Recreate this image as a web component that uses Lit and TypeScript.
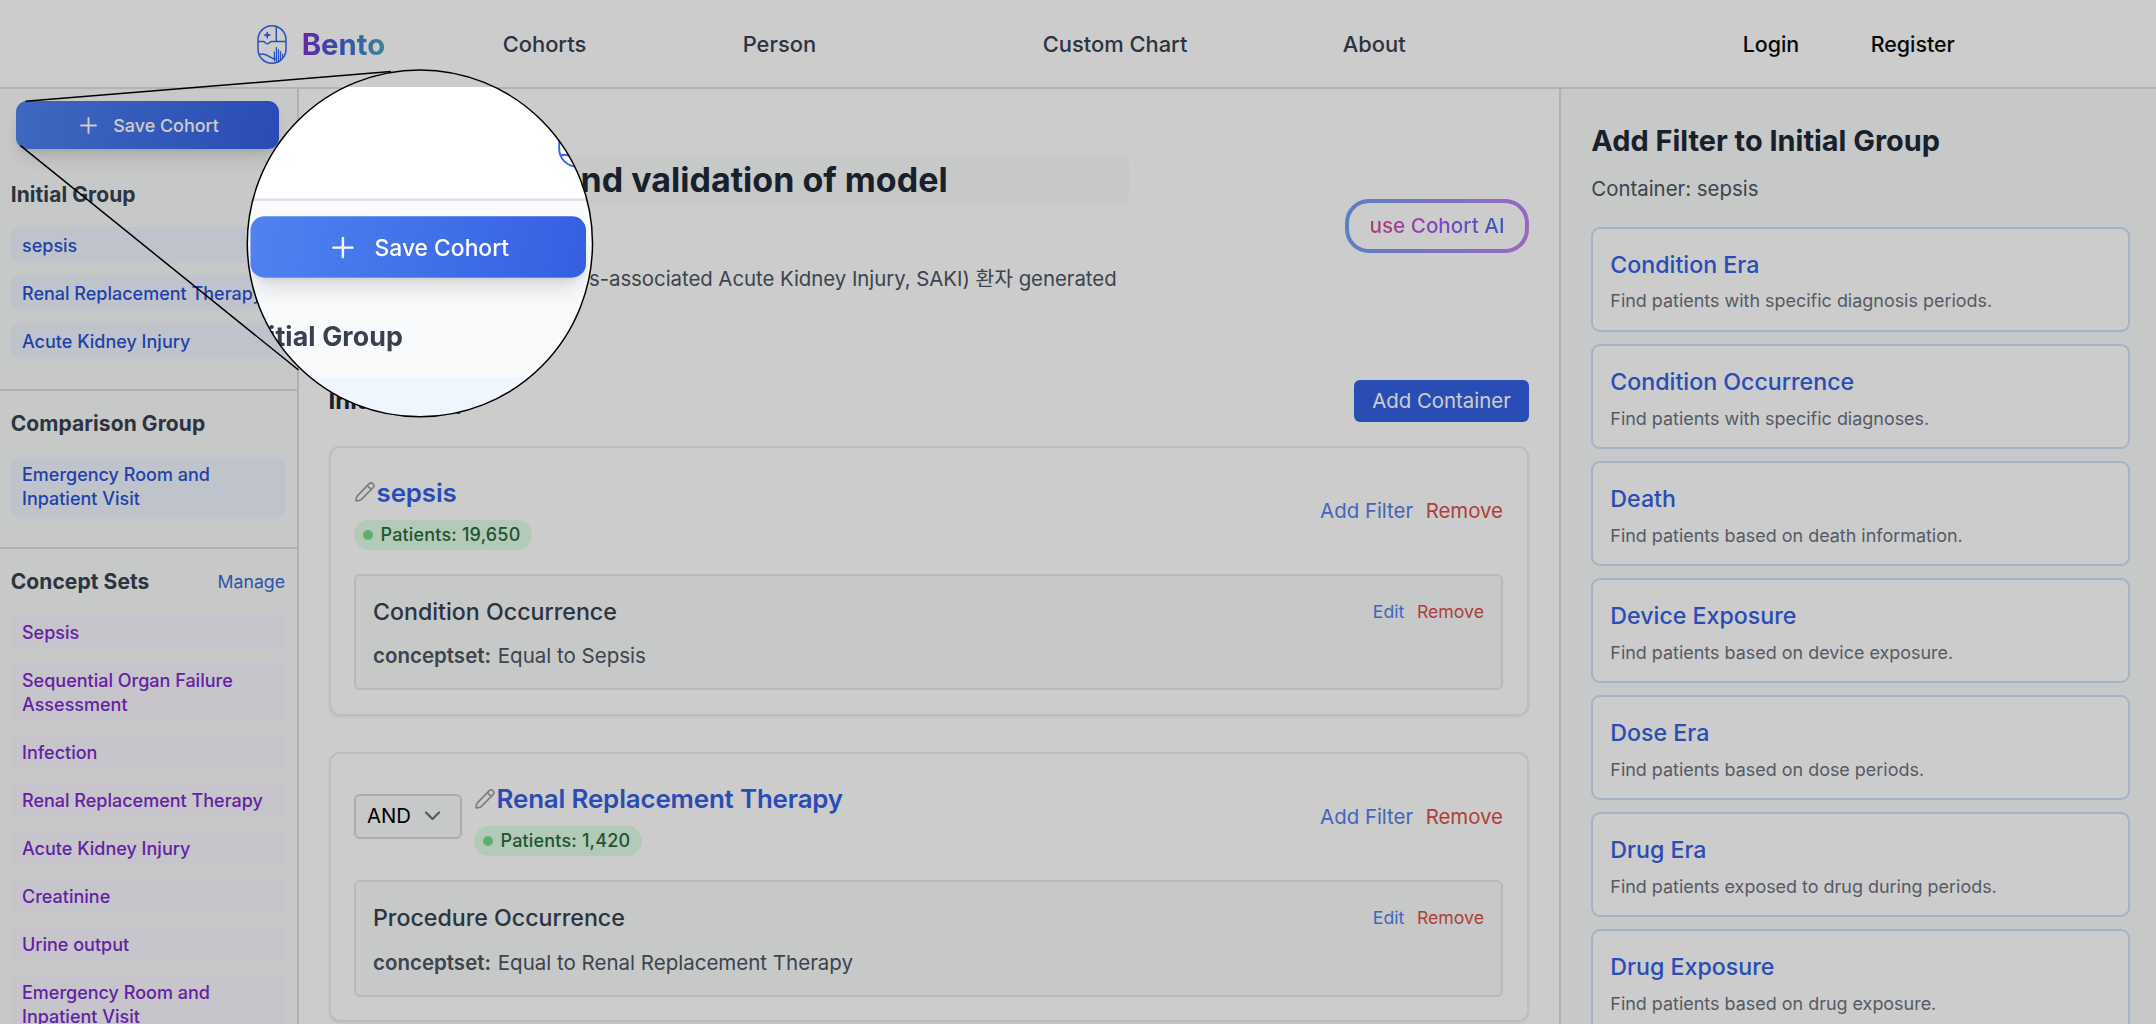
import { LitElement, html, css, nothing } from "lit";
import { customElement, property } from "lit/decorators.js";

interface FilterEntry {
  kind: string;
  value: string;
}

interface ContainerEntry {
  operator?: string;
  name: string;
  patients: string;
  filter: FilterEntry;
}

const INITIAL_GROUP = ["sepsis", "Renal Replacement Therapy", "Acute Kidney Injury"];
const COMPARISON_GROUP = ["Emergency Room and Inpatient Visit"];
const CONCEPT_SETS = [
  "Sepsis",
  "Sequential Organ Failure Assessment",
  "Infection",
  "Renal Replacement Therapy",
  "Acute Kidney Injury",
  "Creatinine",
  "Urine output",
  "Emergency Room and Inpatient Visit",
];

const LENS_ROWS = ["\u00a0"];

const CONTAINERS: ContainerEntry[] = [
  {
    name: "sepsis",
    patients: "19,650",
    filter: { kind: "Condition Occurrence", value: "Equal to Sepsis" },
  },
  {
    operator: "AND",
    name: "Renal Replacement Therapy",
    patients: "1,420",
    filter: { kind: "Procedure Occurrence", value: "Equal to Renal Replacement Therapy" },
  },
];

const FILTERS: [string, string][] = [
  ["Condition Era", "Find patients with specific diagnosis periods."],
  ["Condition Occurrence", "Find patients with specific diagnoses."],
  ["Death", "Find patients based on death information."],
  ["Device Exposure", "Find patients based on device exposure."],
  ["Dose Era", "Find patients based on dose periods."],
  ["Drug Era", "Find patients exposed to drug during periods."],
  ["Drug Exposure", "Find patients based on drug exposure."],
];

@customElement("bento-logo")
export class BentoLogo extends LitElement {
  static styles = css`
    :host {
      display: block;
      width: 30px;
      height: 39px;
    }
    svg {
      display: block;
      fill: none;
      stroke: #3565ec;
      stroke-width: 1.5;
      stroke-linejoin: round;
    }
    .solid {
      fill: #3565ec;
      stroke: none;
    }
    .fine {
      stroke-width: 1.2;
    }
  `;

  render() {
    return html`<svg width="30" height="39" viewBox="0 0 30 39">
      <rect x="1" y="0.8" width="28" height="37.4" rx="14" />
      <path d="M19.3 1.4V16.5" />
      <path d="M1 16.5H6.2C8.2 16.5 8.6 18.8 10.4 18.8S12.6 16.5 14.6 16.5H29" />
      <path
        class="solid"
        d="M10.3 6.3L11.3 9.1L13.9 10.1L11.3 11.1L10.3 13.9L9.3 11.1L6.7 10.1L9.3 9.1Z"
      />
      <path class="fine" d="M10.3 7V13.2M7.2 10.1H13.4" />
      <path d="M1.8 29.4C6 28.2 9.5 29.4 12.5 31.6C15 33.4 17 34 19.3 34" />
      <path
        class="fine"
        d="M17.4 26.5V36.5M19.4 22V37M21.4 24V36.6M23.4 26V35.4M25.4 28.5V33.4"
      />
    </svg>`;
  }
}

@customElement("save-button")
export class SaveButton extends LitElement {
  static styles = css`
    :host {
      display: block;
    }
    .button {
      display: flex;
      align-items: center;
      gap: 16px;
      width: 263px;
      height: 48px;
      box-sizing: border-box;
      padding: 1px 0 0 64px;
      border-radius: 11px;
      background: linear-gradient(100deg, #4f83f0, #355fe2);
      box-shadow: 0 12px 18px -4px rgba(0, 0, 0, 0.13), 0 4px 6px -3px rgba(0, 0, 0, 0.1);
      color: #fff;
      font-size: 17.9px;
      font-weight: 550;
      line-height: 24px;
    }
    svg {
      display: block;
      stroke: #fff;
      stroke-width: 1.9;
      stroke-linecap: round;
    }
  `;

  render() {
    return html`<div class="button">
      <svg width="17" height="17" viewBox="0 0 17 17"><path d="M8.5 1V16M1 8.5H16" /></svg>
      <span>Save Cohort</span>
    </div>`;
  }
}

@customElement("side-section")
export class SideSection extends LitElement {
  @property() heading = "";
  @property() action = "";
  @property() tone = "blue";
  @property({ attribute: false }) items: string[] = [];

  static styles = css`
    :host {
      display: block;
      padding: 19.5px 12px 30px 10.7px;
    }
    .head {
      display: flex;
      justify-content: space-between;
      align-items: center;
      height: 28px;
      margin-bottom: 18.3px;
    }
    .title {
      color: #374151;
      font-size: 21px;
      font-weight: 660;
      letter-spacing: 0.08px;
      line-height: 28px;
    }
    .action {
      color: #3a68d8;
      font-size: 17.7px;
      line-height: 28px;
    }
    .list {
      display: flex;
      flex-direction: column;
      gap: 12px;
    }
    .item {
      padding: 6.8px 12px 5.2px 11.3px;
      border-radius: 8px;
      font-size: 18px;
      font-weight: 550;
      line-height: 24px;
    }
    .text {
      display: block;
      max-width: 244px;
    }
    .blue {
      background: #eff6ff;
      color: #2c51d4;
    }
    .purple {
      background: #faf5ff;
      color: #7b2bcb;
    }
  `;

  render() {
    return html`<div class="head">
        <span class="title">${this.heading}</span>
        ${this.action ? html`<span class="action">${this.action}</span>` : nothing}
      </div>
      <div class="list">
        ${this.items.map(
          (t) => html`<div class="item ${this.tone}"><span class="text">${t}</span></div>`
        )}
      </div>`;
  }
}

@customElement("container-card")
export class ContainerCard extends LitElement {
  @property({ attribute: false }) entry!: ContainerEntry;

  static styles = css`
    :host {
      display: block;
    }
    .card {
      box-sizing: border-box;
      height: 269.7px;
      padding: 24px 24px 23px 23.4px;
      border: 2px solid #ecedf1;
      border-radius: 11px;
      background: #fff;
      box-shadow: 0 1px 3px rgba(0, 0, 0, 0.07);
    }
    .head {
      display: flex;
      align-items: center;
      height: 77.7px;
    }
    .operator {
      display: flex;
      align-items: center;
      gap: 13px;
      box-sizing: border-box;
      width: 108px;
      height: 45px;
      margin-right: 12px;
      padding-left: 11px;
      position: relative;
      top: -1px;
      border: 2px solid #d5d8de;
      border-radius: 6px;
      background: #f9fafb;
      color: #000;
      font-size: 20.3px;
      line-height: 28px;
    }
    .operator svg {
      display: block;
      fill: none;
      stroke: #6b7280;
      stroke-width: 2.2;
      stroke-linecap: round;
      stroke-linejoin: round;
    }
    .names {
      flex: 1;
      display: flex;
      flex-direction: column;
      align-items: flex-start;
    }
    .name {
      display: flex;
      align-items: center;
      gap: 2px;
      height: 41px;
      margin-bottom: 6.7px;
      color: #3560e3;
      font-size: 25.9px;
      font-weight: 560;
      letter-spacing: -0.15px;
      line-height: 41px;
    }
    .name svg {
      display: block;
      margin-left: 0.6px;
      fill: none;
      stroke: #9b9ea6;
      stroke-width: 1.7;
      stroke-linejoin: round;
      stroke-linecap: round;
    }
    .badge {
      display: flex;
      align-items: center;
      gap: 7.5px;
      height: 30px;
      box-sizing: border-box;
      padding: 0.5px 12px 0 9px;
      border-radius: 15px;
      background: #e0fde8;
      color: #2b6a3a;
      font-size: 18px;
      font-weight: 540;
      letter-spacing: 0.18px;
      line-height: 28px;
    }
    .dot {
      width: 10px;
      height: 10px;
      border-radius: 50%;
      background: #75dd8a;
    }
    .actions {
      display: flex;
      gap: 12.5px;
      font-size: 20.4px;
      line-height: 28px;
    }
    .small {
      font-size: 17.7px;
    }
    .add {
      color: #5580e6;
    }
    .remove {
      color: #d8504a;
    }
    .filter {
      box-sizing: border-box;
      height: 116.5px;
      margin-top: 24.3px;
      padding: 20.6px 17px 0 17px;
      border: 2px solid #e6e8ec;
      border-radius: 6px;
      background: #f9fafb;
    }
    .row {
      display: flex;
      justify-content: space-between;
      align-items: center;
      height: 30px;
      margin-bottom: 15.9px;
    }
    .kind {
      color: #374151;
      font-size: 23.2px;
      font-weight: 540;
    }
    .value {
      color: #4b5563;
      font-size: 20.5px;
      line-height: 28px;
    }
    .key {
      margin-right: 1px;
      font-weight: 560;
    }
  `;

  render() {
    const e = this.entry;
    return html`<div class="card">
      <div class="head">
        ${e.operator
          ? html`<div class="operator">
              <span>${e.operator}</span>
              <svg width="17" height="10" viewBox="0 0 17 10"><path d="M2 1.5L8.5 8L15 1.5" /></svg>
            </div>`
          : nothing}
        <div class="names">
          <div class="name">
            <svg width="20" height="20" viewBox="0 0 20 20">
              <path
                d="M14 1.9A2.55 2.55 0 0 1 18 5.6L6.2 17.6Q4.4 19 1.2 18.9Q0.8 16 2.4 13.9Z"
              />
              <path d="M12.4 3.8L16.2 7.4" />
            </svg>
            <span>${e.name}</span>
          </div>
          <div class="badge"><span class="dot"></span><span>Patients: ${e.patients}</span></div>
        </div>
        <div class="actions">
          <span class="add">Add Filter</span><span class="remove">Remove</span>
        </div>
      </div>
      <div class="filter">
        <div class="row">
          <span class="kind">${e.filter.kind}</span>
          <div class="actions small">
            <span class="add">Edit</span><span class="remove">Remove</span>
          </div>
        </div>
        <div class="value"><span class="key">conceptset:</span> ${e.filter.value}</div>
      </div>
    </div>`;
  }
}

@customElement("app-root")
export class AppRoot extends LitElement {
  static styles = css`
    :host {
      display: block;
      position: relative;
      width: 2156px;
      height: 1024px;
      overflow: hidden;
      background: #fff;
      font-family: Inter, "Noto Sans CJK KR", sans-serif;
    }
    .page {
      display: flex;
      flex-direction: column;
      height: 1024px;
      overflow: hidden;
    }
    .header {
      flex: none;
      display: grid;
      grid-template-columns: 246px 240px 300px 300px 400px 128px 1fr;
      align-items: center;
      box-sizing: border-box;
      height: 89px;
      padding: 1px 0 0 256.7px;
      border-bottom: 2px solid #dde1e7;
      background: #fff;
      color: #374151;
      font-size: 21.9px;
      font-weight: 520;
      line-height: 30px;
      box-shadow: inset 0 1px 0 #fff;
    }
    .brand {
      display: flex;
      align-items: center;
      gap: 15px;
    }
    .wordmark {
      padding-top: 1px;
      background: linear-gradient(90deg, #7e35cf, #3f63d9 50%, #48a9bd);
      background-clip: text;
      -webkit-background-clip: text;
      color: transparent;
      font-size: 29.3px;
      font-weight: 700;
      line-height: 40px;
    }
    .account {
      color: #0c0c0c;
      font-size: 21.4px;
    }
    .body {
      flex: 1;
      min-height: 0;
      display: grid;
      grid-template-columns: 299px 1fr 597px;
    }
    .sidebar {
      box-sizing: border-box;
      width: 299px;
      min-height: 0;
      overflow: hidden;
      padding-top: 12px;
      border-right: 2px solid #dcdee2;
      background: #f9fafb;
    }
    .save {
      margin: 0 0 12px 16.3px;
    }
    .divided {
      border-top: 2px solid #dcdee2;
    }
    .main {
      min-width: 0;
      min-height: 0;
      overflow: hidden;
      padding: 65.7px 30px 0 29.6px;
    }
    .intro {
      display: flex;
      align-items: center;
      justify-content: space-between;
      height: 142px;
      margin-bottom: 83.3px;
    }
    .summary {
      display: flex;
      flex-direction: column;
      gap: 61.5px;
      width: 800px;
      height: 142px;
    }
    .title {
      height: 48.5px;
      box-sizing: border-box;
      padding: 1px 181px 0 0;
      border-radius: 8px;
      background: #f9fafb;
      color: #1f2937;
      font-size: 34px;
      font-weight: 700;
      line-height: 48px;
      text-align: right;
      white-space: nowrap;
    }
    .description {
      padding-right: 12px;
      color: #4b5563;
      font-size: 20.4px;
      letter-spacing: -0.04px;
      line-height: 28px;
      text-align: right;
      white-space: nowrap;
    }
    .assistant {
      display: flex;
      align-items: center;
      justify-content: center;
      box-sizing: border-box;
      width: 184px;
      height: 54px;
      border: 4.6px solid transparent;
      border-radius: 24px;
      background: linear-gradient(#fff, #fff) padding-box,
        linear-gradient(90deg, #769ff2, #bd82f0) border-box;
    }
    .assistant-text {
      background: linear-gradient(90deg, #e24a92, #a659f3 50%, #4573e2);
      background-clip: text;
      -webkit-background-clip: text;
      color: transparent;
      font-size: 20.7px;
      font-weight: 500;
      line-height: 28px;
    }
    .group-head {
      display: flex;
      align-items: center;
      justify-content: space-between;
      height: 42px;
      margin-bottom: 24px;
    }
    .group-title {
      padding-top: 1px;
      color: #1f2937;
      font-size: 24px;
      font-weight: 700;
      line-height: 32px;
    }
    .primary {
      display: flex;
      align-items: center;
      justify-content: center;
      width: 175px;
      height: 42px;
      border-radius: 6px;
      background: #3560e3;
      color: #fff;
      font-size: 20.4px;
    }
    .cards {
      display: flex;
      flex-direction: column;
      gap: 36.5px;
    }
    .panel {
      box-sizing: border-box;
      min-height: 0;
      overflow: hidden;
      padding: 33.5px 26px 0 30.3px;
      border-left: 2px solid #dcdee2;
      background: #f9fafb;
    }
    .panel-title {
      color: #1f2937;
      font-size: 28.9px;
      font-weight: 700;
      line-height: 36px;
    }
    .panel-note {
      margin: 16px 0 24.5px;
      color: #4b5563;
      font-size: 20.4px;
      line-height: 28px;
    }
    .options {
      display: flex;
      flex-direction: column;
      gap: 12.5px;
    }
    .option {
      flex: none;
      box-sizing: border-box;
      height: 104.55px;
      padding: 21.2px 17px 0;
      border: 2px solid #cde0fb;
      border-radius: 9px;
      background: #fff;
    }
    .option-name {
      margin-bottom: 9.3px;
      color: #3560e3;
      font-size: 23.2px;
      font-weight: 540;
      line-height: 30px;
    }
    .option-note {
      color: #6b7280;
      font-size: 17.95px;
      line-height: 24px;
    }
    .scrim {
      position: absolute;
      inset: 0;
      background: rgba(0, 0, 0, 0.2);
    }
    .lens {
      position: absolute;
      left: 247px;
      top: 70px;
      width: 346px;
      height: 347px;
      overflow: hidden;
      border-radius: 50%;
    }
    .lens-page {
      position: absolute;
      left: -16.7px;
      top: 17.4px;
      width: 297px;
      height: 270px;
      overflow: hidden;
      background: #f9fafb;
      transform: scale(1.276, 1.28);
      transform-origin: 0 0;
    }
    .lens-header {
      display: flex;
      align-items: center;
      box-sizing: border-box;
      height: 89px;
      padding-left: 256.7px;
      border-bottom: 2px solid #dde2e9;
      background: #fff;
    }
    .lens-side {
      padding-top: 12px;
    }
    .callout {
      position: absolute;
      left: 0;
      top: 0;
      fill: none;
      stroke: #000;
      stroke-width: 1.5;
    }
  `;

  render() {
    return html`
      <div class="page">
        <header class="header">
          <div class="brand">
            <bento-logo></bento-logo>
            <span class="wordmark">Bento</span>
          </div>
          <span>Cohorts</span>
          <span>Person</span>
          <span>Custom Chart</span>
          <span>About</span>
          <span class="account">Login</span>
          <span class="account">Register</span>
        </header>
        <div class="body">
          <nav class="sidebar">
            <save-button class="save"></save-button>
            <side-section heading="Initial Group" .items=${INITIAL_GROUP}></side-section>
            <side-section
              class="divided"
              heading="Comparison Group"
              .items=${COMPARISON_GROUP}
            ></side-section>
            <side-section
              class="divided"
              heading="Concept Sets"
              action="Manage"
              tone="purple"
              .items=${CONCEPT_SETS}
            ></side-section>
          </nav>
          <main class="main">
            <div class="intro">
              <div class="summary">
                <div class="title">and validation of model</div>
                <div class="description">
                  Sepsis-associated Acute Kidney Injury, SAKI) 환자 generated
                </div>
              </div>
              <div class="assistant"><span class="assistant-text">use Cohort AI</span></div>
            </div>
            <div class="group-head">
              <span class="group-title">Initial Group</span>
              <div class="primary">Add Container</div>
            </div>
            <div class="cards">
              ${CONTAINERS.map((c) => html`<container-card .entry=${c}></container-card>`)}
            </div>
          </main>
          <aside class="panel">
            <div class="panel-title">Add Filter to Initial Group</div>
            <div class="panel-note">Container: sepsis</div>
            <div class="options">
              ${FILTERS.map(
                ([name, note]) => html`<div class="option">
                  <div class="option-name">${name}</div>
                  <div class="option-note">${note}</div>
                </div>`
              )}
            </div>
          </aside>
        </div>
      </div>
      <div class="scrim"></div>
      <div class="lens">
        <div class="lens-page">
          <div class="lens-header"><bento-logo></bento-logo></div>
          <div class="lens-side">
            <save-button class="save"></save-button>
            <side-section heading="Initial Group" .items=${LENS_ROWS}></side-section>
          </div>
        </div>
      </div>
      <svg class="callout" width="2156" height="1024" viewBox="0 0 2156 1024">
        <path d="M25.5 101.3L391 71.5M20.5 145.7L298.5 370" />
        <ellipse cx="419.9" cy="243.4" rx="172.6" ry="173.4" />
      </svg>
    `;
  }
}
